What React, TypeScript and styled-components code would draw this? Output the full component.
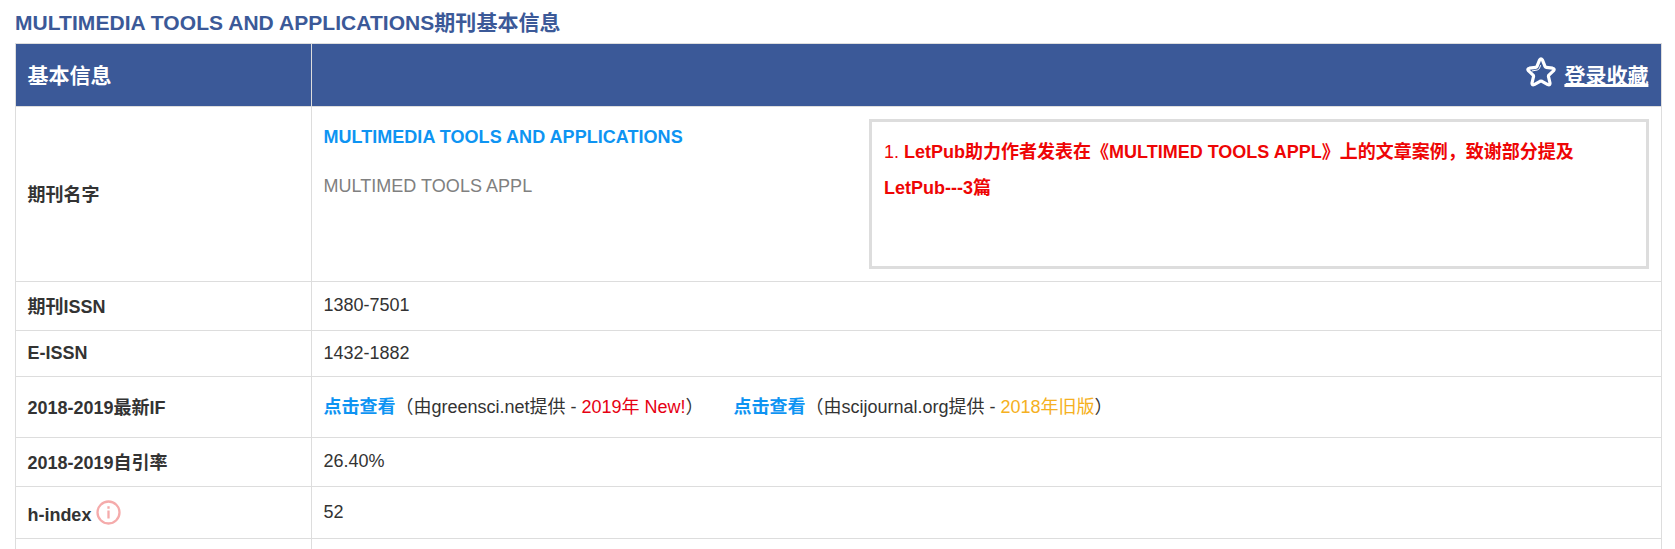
import React from 'react';
import styled, { createGlobalStyle } from 'styled-components';

const GlobalStyle = createGlobalStyle`
  * { box-sizing: border-box; }
  body {
    margin: 0;
    background: #fff;
    overflow: hidden;
    color: #333;
    font: 18px/26px "Liberation Sans", Arial, "Noto Sans CJK SC", sans-serif;
  }
`;

const Page = styled.main`
  height: 549px;
  padding: 0 13px 0 15px;
  overflow: hidden;
`;

const Title = styled.h1`
  margin: 0;
  height: 43px;
  padding-top: 8px;
  font-size: 21px;
  line-height: 30px;
  letter-spacing: 0.05px;
  color: #3b5998;
`;

const Table = styled.div`
  border: 1px solid #ddd;
  border-bottom: 0;
`;

const Row = styled.div<{ $height: number }>`
  display: grid;
  grid-template-columns: 296px 1fr;
  height: ${(p) => p.$height}px;
  border-bottom: 1px solid #ddd;
`;

const HeaderRow = styled(Row)`
  background: #3b5998;
  color: #fff;
  font-size: 21px;
  font-weight: bold;
`;

const LabelCell = styled.div<{ $top?: number }>`
  display: flex;
  align-items: flex-start;
  padding: ${(p) => p.$top ?? 0}px 11px 0 11.4px;
  border-right: 1px solid #ddd;
  font-weight: bold;
  white-space: nowrap;
`;

const ValueCell = styled.div<{ $top?: number }>`
  display: flex;
  align-items: flex-start;
  padding: ${(p) => p.$top ?? 0}px 12px 0 11.4px;
  white-space: pre;
`;

const Favorite = styled.div`
  display: flex;
  margin-left: auto;
  gap: 8.5px;
`;

const StarIcon = styled.svg`
  width: 30px;
  height: 30px;
  margin-top: -6px;
`;

const FavoriteLink = styled.a`
  margin-right: 0.6px;
  text-decoration: underline;
  text-decoration-thickness: 3px;
  text-underline-offset: 1px;
  text-decoration-skip-ink: none;
`;

const Names = styled.div`
  display: flex;
  flex-direction: column;
  gap: 23px;
  padding-top: 5px;
  letter-spacing: 0.04px;
`;

const JournalLink = styled.a`
  color: #0e94f2;
  font-weight: bold;
`;

const ShortName = styled.span`
  color: gray;
`;

const CaseBox = styled.div`
  width: 780px;
  height: 150px;
  margin-left: auto;
  padding: 12px;
  border: 3px solid #ddd;
  color: #ee0505;
  line-height: 36px;
  white-space: normal;
`;

const Source = styled.span`
  margin-right: 30px;
`;

const Tag = styled.span<{ $color: string }>`
  color: ${(p) => p.$color};
`;

const InfoIcon = styled.svg`
  width: 25px;
  height: 25px;
  margin: -2.5px 0 0 5px;
`;

export default function App() {
  return (
    <Page>
      <GlobalStyle />
      <Title>MULTIMEDIA TOOLS AND APPLICATIONS期刊基本信息</Title>
      <Table>
        <HeaderRow $height={63}>
          <LabelCell $top={19}>基本信息</LabelCell>
          <ValueCell $top={19}>
            <Favorite>
              <StarIcon viewBox="0 0 30 30" fill="none" stroke="#fff" strokeLinejoin="round" strokeLinecap="round">
                <path
                  strokeWidth="3.2"
                  d="M13.6 2.9Q15 .8 16.4 2.9L19 9.4Q19.3 10.2 20.2 10.3L26.6 11.2Q29.2 11.8 27.4 13.9L22.9 18.1Q22.3 18.8 22.5 19.7L24 26Q24.2 28.6 21.8 27.6L16 24.3Q15 23.8 14 24.3L8.2 27.6Q5.8 28.6 6 26L7.5 19.7Q7.7 18.8 7.1 18.1L2.6 13.9Q.8 11.8 3.4 11.2L9.8 10.3Q10.7 10.2 11 9.4Z"
                />
                <path strokeWidth="1" d="M6.3 13.9 11.3 13Q13 12.6 13.6 11L14.5 8.6" />
              </StarIcon>
              <FavoriteLink>登录收藏</FavoriteLink>
            </Favorite>
          </ValueCell>
        </HeaderRow>
        <Row $height={175}>
          <LabelCell $top={75}>期刊名字</LabelCell>
          <ValueCell $top={12}>
            <Names>
              <JournalLink>MULTIMEDIA TOOLS AND APPLICATIONS</JournalLink>
              <ShortName>MULTIMED TOOLS APPL</ShortName>
            </Names>
            <CaseBox>
              1. <b>LetPub助力作者发表在《MULTIMED TOOLS APPL》上的文章案例，致谢部分提及LetPub---3篇</b>
            </CaseBox>
          </ValueCell>
        </Row>
        <Row $height={49}>
          <LabelCell $top={12}>期刊ISSN</LabelCell>
          <ValueCell $top={10}>1380-7501</ValueCell>
        </Row>
        <Row $height={46}>
          <LabelCell $top={9}>E-ISSN</LabelCell>
          <ValueCell $top={9}>1432-1882</ValueCell>
        </Row>
        <Row $height={61}>
          <LabelCell $top={18}>2018-2019最新IF</LabelCell>
          <ValueCell $top={17}>
            <Source>
              <JournalLink>点击查看</JournalLink>（由greensci.net提供 - <Tag $color="#e60012">2019年 New!</Tag>）
            </Source>
            <Source>
              <JournalLink>点击查看</JournalLink>（由scijournal.org提供 - <Tag $color="#f5b021">2018年旧版</Tag>）
            </Source>
          </ValueCell>
        </Row>
        <Row $height={49}>
          <LabelCell $top={12}>2018-2019自引率</LabelCell>
          <ValueCell $top={10}>26.40%</ValueCell>
        </Row>
        <Row $height={52}>
          <LabelCell $top={15}>
            h-index
            <InfoIcon viewBox="0 0 25 25" fill="none" stroke="#f5abab" strokeWidth="2.3">
              <circle cx="12.5" cy="12.5" r="11" />
              <path d="M12.5 10.5V18.5M12.5 6.3V8.8" />
            </InfoIcon>
          </LabelCell>
          <ValueCell $top={12}>52</ValueCell>
        </Row>
        <Row $height={49}>
          <LabelCell />
          <ValueCell />
        </Row>
      </Table>
    </Page>
  );
}
